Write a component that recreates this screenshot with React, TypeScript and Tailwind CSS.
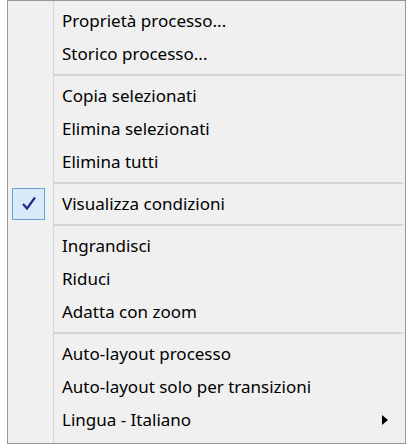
import React from "react";

type Entry =
  | { kind: "item"; label: string; checked?: boolean; submenu?: boolean }
  | { kind: "sep" };

const entries: Entry[] = [
  { kind: "item", label: "Proprietà processo..." },
  { kind: "item", label: "Storico processo..." },
  { kind: "sep" },
  { kind: "item", label: "Copia selezionati" },
  { kind: "item", label: "Elimina selezionati" },
  { kind: "item", label: "Elimina tutti" },
  { kind: "sep" },
  { kind: "item", label: "Visualizza condizioni", checked: true },
  { kind: "sep" },
  { kind: "item", label: "Ingrandisci" },
  { kind: "item", label: "Riduci" },
  { kind: "item", label: "Adatta con zoom" },
  { kind: "sep" },
  { kind: "item", label: "Auto-layout processo" },
  { kind: "item", label: "Auto-layout solo per transizioni" },
  { kind: "item", label: "Lingua - Italiano", submenu: true },
];

const CheckMark = () => (
  <svg width="16" height="15" viewBox="0 0 16 15">
    <path
      d="M2 8 L6 12.5 L14 1.5"
      fill="none"
      stroke="#1c2a86"
      strokeWidth="2.2"
      strokeLinejoin="miter"
    />
  </svg>
);

// Win-style gutter cell with the vertical rule on its right
const Gutter = ({ children }: { children?: React.ReactNode }) => (
  <div className="w-[46px] shrink-0 self-stretch flex items-center pl-[4px] border-r border-[#d7d7d7]">
    {children}
  </div>
);

export default function App() {
  return (
    <div
      className="w-[409px] h-[448px] bg-white pl-[7px] pr-[3px] pb-[4px]"
      style={{ fontFamily: '"Noto Sans", "Open Sans", sans-serif' }}
    >
      <div className="h-full border border-[#979797] bg-[#f0f0f0] flex flex-col">
        <div className="flex h-[3px]">
          <Gutter />
        </div>
        {entries.map((e, i) =>
          e.kind === "sep" ? (
            <div key={i} className="flex h-[9px]">
              <Gutter />
              <div className="flex-1 flex items-center pr-[2px]">
                <div className="w-full h-[2px] bg-[#d5d5d5]" />
              </div>
            </div>
          ) : (
            <div key={i} className="flex h-[33px]">
              <Gutter>
                {e.checked && (
                  <div className="w-[33px] h-[32px] flex items-center justify-center bg-[#d9eafb] border border-[#6e9fd8]">
                    <CheckMark />
                  </div>
                )}
              </Gutter>
              <div className="flex-1 flex items-center pl-[8px] pr-[17px] text-[17px] text-black">
                <span className="flex-1 whitespace-nowrap">{e.label}</span>
                {e.submenu && (
                  <svg width="6" height="10" viewBox="0 0 6 10">
                    <path d="M0 0 L6 5 L0 10 Z" fill="#000" />
                  </svg>
                )}
              </div>
            </div>
          )
        )}
        <div className="flex flex-1">
          <Gutter />
        </div>
      </div>
    </div>
  );
}
